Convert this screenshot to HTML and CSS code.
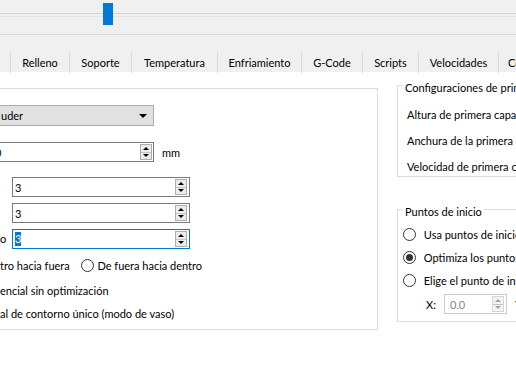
FILE: index.html
```html
<!DOCTYPE html>
<html lang="es">
<head>
  <meta charset="UTF-8">
  <meta name="viewport" content="width=device-width, initial-scale=1.0">
  <title>Configuración de impresión</title>
  <link rel="stylesheet" href="styles.css">
</head>
<body>

<div class="top">
  <div class="slider">
    <div class="groove"></div>
    <div class="handle"></div>
  </div>
</div>

<div class="tabs">
  <div class="tab"></div>
  <div class="tab">Relleno</div>
  <div class="tab">Soporte</div>
  <div class="tab">Temperatura</div>
  <div class="tab">Enfriamiento</div>
  <div class="tab">G-Code</div>
  <div class="tab">Scripts</div>
  <div class="tab">Velocidades</div>
  <div class="tab tab-last">Costura</div>
</div>

<div class="page">
  <div class="group">
    <div class="combo"><span>uder</span><i class="arrow"></i></div>

    <div class="unit-row">
      <div class="spin spin-wide">
        <span>0</span>
        <span class="btns"><i class="up"></i><i class="down"></i></span>
      </div>
      <span>mm</span>
    </div>

    <div class="form">
      <span class="lbl"></span>
      <div class="spin">
        <span>3</span>
        <span class="btns"><i class="up"></i><i class="down"></i></span>
      </div>
      <span class="lbl"></span>
      <div class="spin">
        <span>3</span>
        <span class="btns"><i class="up"></i><i class="down"></i></span>
      </div>
      <span class="lbl">o</span>
      <div class="spin spin-focus">
        <span class="sel">3</span>
        <span class="btns"><i class="up"></i><i class="down"></i></span>
      </div>
    </div>

    <div class="line line-first">tro hacia fuera <span class="radio radio-gap"></span> De fuera hacia dentro</div>
    <div class="line line-second">encial sin optimización</div>
    <div class="line line-third">al de contorno único (modo de vaso)</div>
  </div>

  <div class="side">
    <fieldset class="box box-layer">
      <legend>Configuraciones de primera capa</legend>
      <div class="field">Altura de primera capa</div>
      <div class="field">Anchura de la primera capa</div>
      <div class="field">Velocidad de primera capa</div>
    </fieldset>

    <fieldset class="box box-start">
      <legend>Puntos de inicio</legend>
      <div class="option"><span class="radio"></span> Usa puntos de inicio aleatorios</div>
      <div class="option"><span class="radio checked"></span> Optimiza los puntos de inicio</div>
      <div class="option"><span class="radio"></span> Elige el punto de inicio</div>
      <div class="coords">
        <span>X:</span>
        <div class="spin spin-off">
          <span>0.0</span>
          <span class="btns"><i class="up"></i><i class="down"></i></span>
        </div>
        <span>Y:</span>
      </div>
    </fieldset>
  </div>
</div>

</body>
</html>
```

FILE: styles.css
```css
body {
  margin: 0;
  width: 516px;
  height: 366px;
  overflow: hidden;
  background-color: #f0f0f0;
  font-family: 'Lato', 'Open Sans', sans-serif;
  font-size: 11px;
  color: #000;
}
.top {
  height: 52px;
}
.slider {
  position: relative;
  height: 34px;
  border-bottom: 1px solid #dadada;
}
.groove {
  position: relative;
  top: 13px;
  height: 2px;
  border-top: 1px solid #d6d6d6;
  border-bottom: 1px solid #e4e4e4;
}
.handle {
  position: absolute;
  left: 103px;
  top: 3px;
  width: 10px;
  height: 22px;
  background-color: #0078d7;
}
.tabs {
  display: grid;
  grid-template-columns: 11px 59px 62px 86px 84px 61px 56px 80px 70px;
  height: 20px;
}
.tab {
  border-right: 1px solid #d9d9d9;
  text-align: center;
  line-height: 21px;
  white-space: nowrap;
}
.tab-last {
  text-align: left;
  padding-left: 9px;
}
.page {
  display: flex;
  align-items: flex-start;
  height: 294px;
  background-color: #fff;
}
.group {
  flex: none;
  display: flex;
  flex-direction: column;
  align-items: flex-start;
  box-sizing: border-box;
  width: 388px;
  height: 242px;
  margin: 16px 0 0 -10px;
  border: 1px solid #dcdcdc;
}
.combo {
  display: flex;
  align-items: center;
  justify-content: space-between;
  box-sizing: border-box;
  width: 163px;
  height: 21px;
  margin-top: 16px;
  padding: 0 6px 0 9px;
  background-color: #e1e1e1;
  border: 1px solid #adadad;
}
.arrow {
  border-left: 4px solid transparent;
  border-right: 4px solid transparent;
  border-top: 4px solid #000;
}
.unit-row {
  display: flex;
  align-items: center;
  gap: 8px;
  margin-top: 16px;
}
.spin {
  display: flex;
  align-items: center;
  justify-content: space-between;
  box-sizing: border-box;
  height: 20px;
  padding: 0 2px 0 2px;
  background-color: #fff;
  border: 1px solid #7a7a7a;
}
.spin-wide {
  width: 163px;
  padding-left: 3px;
  padding-right: 1px;
}
.spin-focus {
  border-color: #0078d7;
}
.sel {
  background-color: #0078d7;
  color: #fff;
  line-height: 14px;
}
.btns {
  display: flex;
  flex-direction: column;
  box-sizing: border-box;
  width: 12px;
  height: 16px;
  border: 1px solid #adadad;
  background-color: #ececec;
}
.btns i {
  flex: 1;
  display: flex;
  align-items: center;
  justify-content: center;
}
.btns .down {
  border-top: 1px solid #c4c4c4;
}
.up::before {
  content: "";
  border-left: 3px solid transparent;
  border-right: 3px solid transparent;
  border-bottom: 3px solid #000;
}
.down::before {
  content: "";
  border-left: 3px solid transparent;
  border-right: 3px solid transparent;
  border-top: 3px solid #000;
}
.form {
  display: grid;
  grid-template-columns: 21px 178px;
  row-gap: 6px;
  margin-top: 15px;
}
.lbl {
  padding-left: 9px;
  line-height: 20px;
}
.line {
  display: flex;
  align-items: center;
  height: 16px;
  padding-left: 9px;
  white-space: pre;
}
.line-first {
  margin-top: 8px;
}
.line-second {
  margin-top: 9px;
}
.line-third {
  margin-top: 7px;
}
.radio {
  position: relative;
  box-sizing: border-box;
  width: 13px;
  height: 13px;
  border: 1px solid #333;
  border-radius: 50%;
  background-color: #fff;
}
.radio-gap {
  margin: 0 1px 0 8px;
}
.radio.checked::after {
  content: "";
  position: absolute;
  left: 2px;
  top: 2px;
  width: 7px;
  height: 7px;
  border-radius: 50%;
  background-color: #333;
}
.side {
  flex: none;
  width: 200px;
  margin-left: 19px;
}
.box {
  margin: 0;
  border: 1px solid #dcdcdc;
  white-space: nowrap;
}
.box legend {
  padding: 6px 2px 0;
  line-height: 14px;
}
.box-layer {
  margin-top: 3px;
  padding: 12px 0 1px 9px;
}
.box-layer legend {
  margin-left: -4px;
}
.field {
  height: 16px;
  line-height: 16px;
}
.field + .field {
  margin-top: 10px;
}
.box-start {
  margin-top: 22px;
  padding: 4px 0 5px 5px;
}
.option {
  display: flex;
  align-items: center;
  gap: 5px;
  height: 23px;
  white-space: pre;
}
.coords {
  display: flex;
  align-items: center;
  gap: 8px;
  height: 24px;
  padding-left: 23px;
}
.spin-off {
  width: 63px;
  padding-left: 5px;
  border-color: #cccccc;
  color: #838383;
}
.spin-off .btns {
  border-color: #d6d6d6;
  background-color: #f4f4f4;
}
.spin-off .up::before {
  border-bottom-color: #a0a0a0;
}
.spin-off .down::before {
  border-top-color: #a0a0a0;
}
```
